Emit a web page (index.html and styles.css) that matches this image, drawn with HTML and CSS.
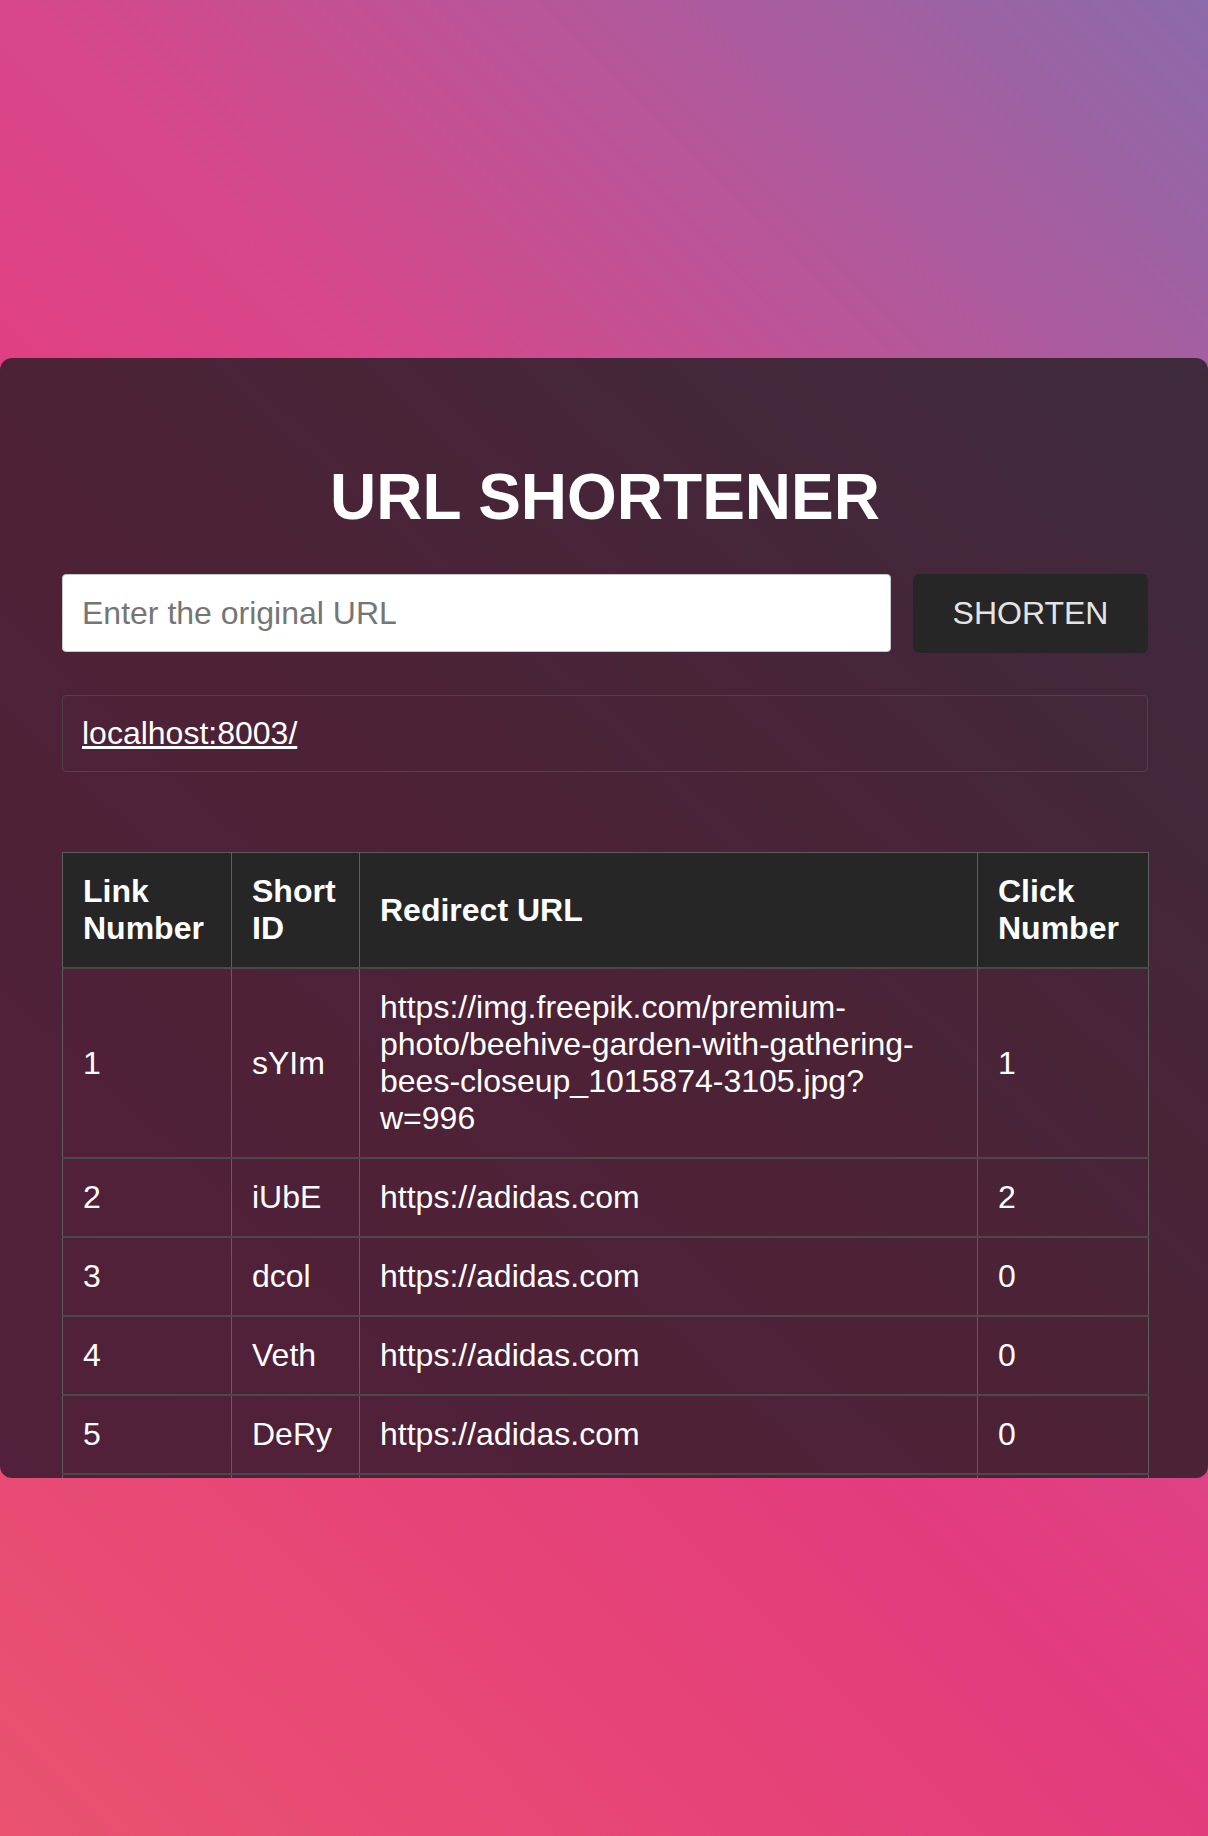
FILE: index.html
```html
<!DOCTYPE html>
<html lang="en">
<head>
<meta charset="utf-8">
<title>URL Shortener</title>
<link rel="stylesheet" href="styles.css">
</head>
<body>
<main class="page">
  <section class="card">
    <h1 class="title">URL SHORTENER</h1>
    <form class="shorten-form">
      <input class="url-input" type="text" placeholder="Enter the original URL">
      <button class="shorten-btn" type="button">SHORTEN</button>
    </form>
    <div class="result">
      <a class="result-link" href="#">localhost:8003/</a>
    </div>
    <table class="links">
      <colgroup>
        <col class="c-num">
        <col class="c-id">
        <col class="c-url">
        <col class="c-clicks">
      </colgroup>
      <thead>
        <tr><th>Link Number</th><th>Short ID</th><th>Redirect URL</th><th>Click Number</th></tr>
      </thead>
      <tbody>
        <tr><td>1</td><td>sYIm</td><td>https://img.freepik.com/premium-photo/beehive-garden-with-gathering-bees-closeup_1015874-3105.jpg?w=996</td><td>1</td></tr>
        <tr><td>2</td><td>iUbE</td><td>https://adidas.com</td><td>2</td></tr>
        <tr><td>3</td><td>dcol</td><td>https://adidas.com</td><td>0</td></tr>
        <tr><td>4</td><td>Veth</td><td>https://adidas.com</td><td>0</td></tr>
        <tr><td>5</td><td>DeRy</td><td>https://adidas.com</td><td>0</td></tr>
        <tr class="empty-row"><td></td><td></td><td></td><td></td></tr>
      </tbody>
    </table>
  </section>
</main>
</body>
</html>
```
FILE: styles.css
```css
* { box-sizing: border-box; }

html, body {
  margin: 0;
  padding: 0;
  height: 100%;
}

body {
  font-family: "Liberation Sans", Arial, sans-serif;
  color: #fff;
  background: linear-gradient(45deg, #e9526f 0%, #e43b7d 40%, #d9468a 60%, #8c6aab 100%);
  min-height: 1836px;
}

.page {
  height: 1836px;
  display: flex;
  align-items: center;
}

.card {
  width: 100%;
  height: 1120px;
  overflow: hidden;
  border-radius: 12px;
  padding: 62px 60px 0 62px;
  background: linear-gradient(to top right, #52203a 0%, #4c2236 50%, #3e2a3c 100%);
}

.title {
  margin: 40px 0 40px;
  font-size: 64px;
  font-weight: bold;
  text-align: center;
  line-height: normal;
  color: #fff;
}

.shorten-form {
  display: flex;
  gap: 22px;
  margin: 0;
}

.url-input {
  flex: 1;
  height: 78px;
  padding: 0 19px;
  font-family: inherit;
  font-size: 32px;
  color: #222;
  background: #fff;
  border: 1px solid #c9c9c9;
  border-radius: 4px;
  outline: none;
}

.url-input::placeholder { color: #757575; }

.shorten-btn {
  width: 235px;
  height: 79px;
  padding: 0;
  font-family: inherit;
  font-size: 32px;
  color: #e4e4e4;
  background: #262626;
  border: none;
  border-radius: 6px;
}

.result {
  margin-top: 42px;
  padding: 19px 19px;
  border: 1px solid #4d4448;
  border-radius: 4px;
  font-size: 32px;
  line-height: normal;
}

.result-link {
  color: #fff;
  text-decoration: underline;
}

.links {
  margin-top: 80px;
  width: 100%;
  table-layout: fixed;
  border-collapse: collapse;
  font-size: 32px;
  line-height: normal;
  border: 1px solid #5a5a5a;
}

.c-num { width: 169px; }
.c-id { width: 128px; }
.c-url { width: 618px; }
.c-clicks { width: 171px; }

.links th,
.links td {
  padding: 20px 20px;
  text-align: left;
  vertical-align: middle;
  border-left: 1px solid #5e5e5e;
  border-right: 1px solid #5e5e5e;
  border-bottom: 2px solid #4a4a4a;
  overflow-wrap: break-word;
}

.links th {
  background: #262626;
  font-weight: bold;
  color: #fff;
}

.links td { color: #fff; }

.empty-row td { height: 78px; }
```
